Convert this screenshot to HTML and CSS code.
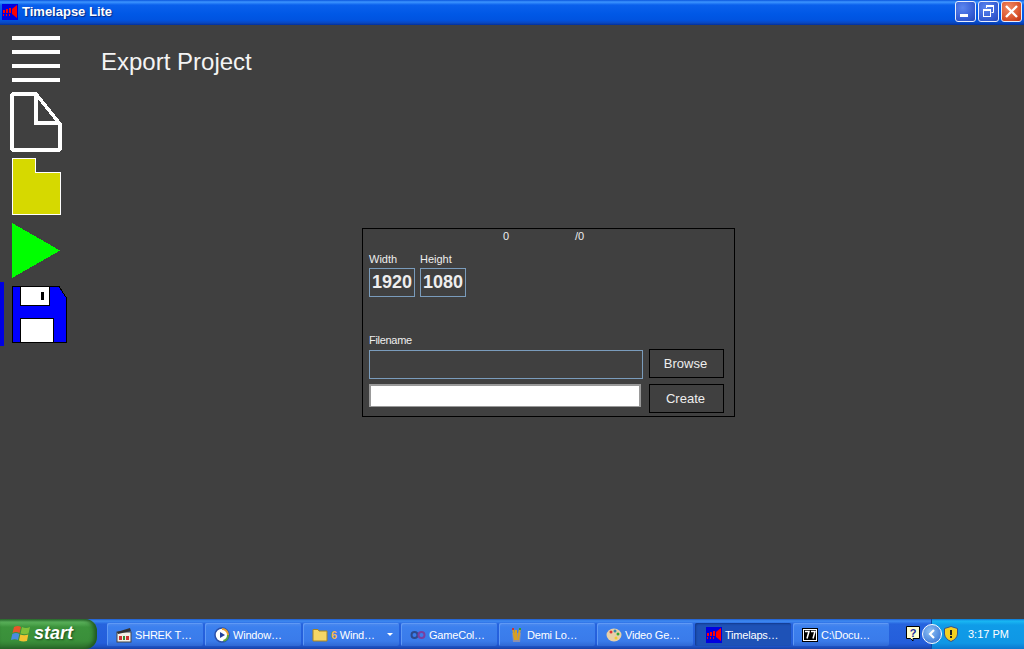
FILE: index.html
```html
<!DOCTYPE html>
<html lang="en">
<head>
  <meta charset="UTF-8">
  <title>Timelapse Lite</title>
  <link rel="stylesheet" href="styles.css">
</head>
<body>
  <div class="window">
    <div class="titlebar">
      <svg class="app-icon" width="16" height="16" viewBox="0 0 16 16"><rect width="16" height="16" fill="#0000e0"/><path d="M1 6h2v3H1zM4 5h2v4H4zM7 4h2v5H7zM1 10h1v2H1zM4 10h1v2H4zM7 10h1v2H7z" fill="#f00"/><path d="M10 5l5-4v13l-5-4z" fill="#f00"/></svg>
      <span class="app-name">Timelapse Lite</span>
      <div class="win-buttons">
        <div class="win-btn">
          <svg width="21" height="21" viewBox="0 0 21 21"><rect x="5" y="13" width="8" height="3" fill="#fff"/></svg>
        </div>
        <div class="win-btn">
          <svg width="21" height="21" viewBox="0 0 21 21"><path d="M8.500 4.500h7v7h-2M8.500 4.500v2.500" fill="none" stroke="#fff"/><path d="M8 4h8v2H8z" fill="#fff"/><rect x="5.500" y="8.500" width="7" height="7" fill="none" stroke="#fff"/><rect x="5" y="8" width="8" height="2" fill="#fff"/></svg>
        </div>
        <div class="win-btn close">
          <svg width="21" height="21" viewBox="0 0 21 21"><path d="M5 5l11 11M16 5L5 16" stroke="#fff" stroke-width="2.400"/></svg>
        </div>
      </div>
    </div>

    <div class="main">
      <div class="sidebar">
        <div class="tool tool-menu">
          <span></span><span></span><span></span><span></span>
        </div>
        <svg class="tool tool-new" width="52" height="60" viewBox="0 0 52 60"><path d="M2 3 Q2 2 3 2H26L50 32V56Q50 58 48 58H4Q2 58 2 56Z" fill="none" stroke="#fff" stroke-width="3.500"/><path d="M26 2V31H50" fill="none" stroke="#fff" stroke-width="3.500"/></svg>
        <svg class="tool tool-open" width="49" height="57" viewBox="0 0 49 57"><path d="M.5 .5H23.500V14.500H48.500V56.500H.5Z" fill="#d6d900" stroke="#fff"/></svg>
        <svg class="tool tool-play" width="48" height="55" viewBox="0 0 48 55"><path d="M0 0L48 27.500 0 55Z" fill="#0f0"/></svg>
        <div class="tool-save">
          <svg width="55" height="57" viewBox="0 0 55 57"><path d="M.5 .5H47L54.500 12V56.500H.5Z" fill="#00f" stroke="#000"/><rect x="8.500" y=".5" width="29" height="19" fill="#fff" stroke="#000"/><rect x="29" y="6" width="3" height="8" fill="#000"/><rect x="8.500" y="32.500" width="33" height="24" fill="#fff" stroke="#000"/></svg>
        </div>
      </div>

      <div class="content">
        <h1 class="heading">Export Project</h1>
        <div class="panel">
          <div class="counter">
            <span class="count">0</span>
            <span class="total">/0</span>
          </div>
          <div class="size-row">
            <div class="field">
              <label>Width</label>
              <div class="size-box">1920</div>
            </div>
            <div class="field">
              <label>Height</label>
              <div class="size-box">1080</div>
            </div>
          </div>
          <label class="file-label">Filename</label>
          <div class="file-row">
            <div class="file-box"></div>
            <div class="btn">Browse</div>
          </div>
          <div class="create-row">
            <div class="progress"></div>
            <div class="btn">Create</div>
          </div>
        </div>
      </div>
    </div>
  </div>

  <div class="taskbar">
    <div class="start">
      <svg width="22" height="20" viewBox="0 0 22 20"><path d="M3 3Q7 1 10 3L8.500 9Q5 7 1.500 9Z" fill="#e8552a"/><path d="M11 3Q15 5 19 3L17.500 9.500Q13.500 11 9.500 9.500Z" fill="#7fc03a"/><path d="M1.300 10Q5 8 8.300 10L7 16Q4 14.500 0 16Z" fill="#4a8be0"/><path d="M9.300 10.500Q13 12 17.300 10.500L16 17Q12 18 8 16.500Z" fill="#f2c230"/></svg>
      <span>start</span>
    </div>
    <div class="tasks">
      <div class="task">
        <svg width="16" height="16" viewBox="0 0 16 16"><rect x="1" y="5" width="14" height="10" fill="#f4f0e8" stroke="#444"/><path d="M1 5L14 1l1 3L2 7z" fill="#333"/><path d="M3 9h3v4H3z" fill="#c33"/><path d="M7 9h2v4H7z" fill="#383"/><path d="M10 9h3v4h-3z" fill="#c33"/></svg>
        <span class="task-text">SHREK T…</span>
      </div>
      <div class="task">
        <svg width="16" height="16" viewBox="0 0 16 16"><circle cx="8" cy="8" r="7" fill="#fff" stroke="#2b4fa8" stroke-width="1.500"/><path d="M8 1a7 7 0 0 1 7 7h-2a5 5 0 0 0-5-5z" fill="#e8a030"/><path d="M15 8a7 7 0 0 1-5 6.700L9 13a5 5 0 0 0 4-5z" fill="#5aa840"/><path d="M6 5l5 3-5 3z" fill="#1f3f9c"/></svg>
        <span class="task-text">Window…</span>
      </div>
      <div class="task">
        <svg width="16" height="14" viewBox="0 0 16 14"><path d="M1 3V1.500H6L7 3H15V13H1Z" fill="#f5d667" stroke="#a88420"/></svg>
        <span class="task-text"><b class="group-count">6</b> Wind…</span>
        <span class="arrow"></span>
      </div>
      <div class="task">
        <svg width="16" height="10" viewBox="0 0 16 10"><circle cx="4.500" cy="5" r="3" fill="none" stroke="#2c4a8c" stroke-width="2"/><circle cx="11.500" cy="5" r="3" fill="none" stroke="#7a3fa0" stroke-width="2"/></svg>
        <span class="task-text">GameCol…</span>
      </div>
      <div class="task">
        <svg width="16" height="16" viewBox="0 0 16 16"><path d="M4 6h9l-1 9H5z" fill="#8a8fb0"/><path d="M5 1l2 12M8 3v10M12 1l-2 12" stroke-width="2" fill="none" stroke="#d9a020"/><path d="M4 1h2v2H4z" fill="#c33"/><path d="M11 1h2v2h-2z" fill="#393"/></svg>
        <span class="task-text">Demi Lo…</span>
      </div>
      <div class="task">
        <svg width="16" height="16" viewBox="0 0 16 16"><ellipse cx="8" cy="8" rx="7.500" ry="6.500" fill="#e8d0a8"/><circle cx="5" cy="5" r="1.500" fill="#d33"/><circle cx="9" cy="4" r="1.500" fill="#38a"/><circle cx="12" cy="7" r="1.500" fill="#3a3"/><circle cx="10" cy="11" r="1.500" fill="#ec3"/></svg>
        <span class="task-text">Video Ge…</span>
      </div>
      <div class="task active">
        <svg width="16" height="16" viewBox="0 0 16 16"><rect width="16" height="16" fill="#0000e0"/><path d="M1 6h2v3H1zM4 5h2v4H4zM7 4h2v5H7zM1 10h1v2H1zM4 10h1v2H4zM7 10h1v2H7z" fill="#f00"/><path d="M10 5l5-4v13l-5-4z" fill="#f00"/></svg>
        <span class="task-text">Timelaps…</span>
      </div>
      <div class="task">
        <svg width="16" height="14" viewBox="0 0 16 14"><rect x=".5" y=".5" width="15" height="13" fill="#fff" stroke="#000"/><rect x="2" y="2" width="12" height="10" fill="#000"/><path d="M3 3.500h4L5 10.500M9 3.500h4L11 10.500" fill="none" stroke="#fff" stroke-width="1.500"/></svg>
        <span class="task-text">C:\Docu…</span>
      </div>
    </div>
    <div class="quick">
      <svg width="14" height="16" viewBox="0 0 14 16"><path d="M.5 .5H13.500V12.500H7V15L4.500 12.500H.5Z" fill="#ffffd0" stroke="#000"/><text x="7" y="10.500" text-anchor="middle" class="help-mark">?</text></svg>
    </div>
    <div class="tray">
      <div class="chevron">
        <svg width="10" height="10" viewBox="0 0 10 10"><path d="M7 1L3 5l4 4" fill="none" stroke="#fff" stroke-width="2.200"/></svg>
      </div>
      <svg class="shield" width="14" height="16" viewBox="0 0 14 16"><path d="M7 .5L13.500 2.500V8Q13 13 7 15.500 1 13 .5 8V2.500Z" fill="#f4d020" stroke="#35508c"/><rect x="6" y="4" width="2" height="5" fill="#222"/><rect x="6" y="10" width="2" height="2" fill="#222"/></svg>
      <span class="clock">3:17 PM</span>
    </div>
  </div>
</body>
</html>
```

FILE: styles.css
```css
* {
  box-sizing: border-box;
}
body {
  display: flex;
  flex-direction: column;
  height: 100vh;
  margin: 0;
  overflow: hidden;
  background-color: #404040;
  font-family: "Liberation Sans", Arial, sans-serif;
  color: white;
}
.window {
  flex: 1;
  display: flex;
  flex-direction: column;
  min-height: 0;
}

/* title bar */
.titlebar {
  display: flex;
  align-items: center;
  height: 25px;
  padding: 0 2px 2px 2px;
  background: linear-gradient(to bottom, #0a55dd 0, #3d95ff 2px, #0a60ec 5px, #0058e6 14px, #0053e0 20px, #0a47bd 23px, #00309c 25px);
}
.app-icon {
  flex: none;
}
.app-name {
  margin-left: 4px;
  font-size: 13px;
  font-weight: bold;
  text-shadow: 1px 1px 1px #0a2a80;
}
.win-buttons {
  display: flex;
  gap: 2px;
  margin-left: auto;
}
.win-btn {
  width: 21px;
  height: 21px;
  border: 1px solid #e8eefc;
  border-radius: 3px;
  background: radial-gradient(circle at 35% 30%, #5c86ee 0, #3a62d8 55%, #2347bd 100%);
  overflow: hidden;
}
.win-btn svg {
  display: block;
  margin: -1px;
}
.win-btn.close {
  background: radial-gradient(circle at 35% 30%, #ee8a66 0, #dd5a32 55%, #bd3010 100%);
}

/* main area */
.main {
  flex: 1;
  display: flex;
  min-height: 0;
}
.sidebar {
  display: flex;
  flex-direction: column;
  align-items: flex-start;
  width: 101px;
  padding: 11px 0 0 12px;
}
.sidebar svg {
  shape-rendering: crispEdges;
}
.tool {
  display: block;
  flex: none;
}
.tool-menu {
  display: flex;
  flex-direction: column;
  gap: 10px;
  width: 48px;
}
.tool-menu span {
  height: 4px;
  background-color: white;
}
.tool-new {
  margin: 10px 0 0 -2px;
}
.tool-open {
  margin-top: 6px;
}
.tool-play {
  margin-top: 8px;
}
.tool-save {
  position: relative;
  margin-top: 8px;
}
.tool-save svg {
  display: block;
}
.tool-save::before {
  content: "";
  position: absolute;
  left: -12px;
  top: -4px;
  width: 4px;
  height: 64px;
  background-color: #0000e0;
}
.content {
  flex: 1;
  min-width: 0;
}
.heading {
  margin: 23px 0 0 0;
  font-size: 24px;
  line-height: 28px;
  font-weight: normal;
  color: #f4f4f4;
}
.panel {
  display: flex;
  flex-direction: column;
  width: 373px;
  height: 189px;
  margin: 152px 0 0 261px;
  padding: 0 10px 0 6px;
  border: 1px solid #000;
  font-size: 11px;
  color: #eee;
}
.counter {
  display: flex;
  height: 14px;
  margin-top: 0;
  margin-bottom: 1px;
  line-height: 14px;
}
.count {
  margin-left: 134px;
  width: 72px;
}
.size-row {
  display: flex;
  gap: 5px;
  margin-top: 9px;
}
.field label {
  display: block;
  line-height: 13px;
  margin-bottom: 2px;
}
.size-box {
  width: 46px;
  height: 29px;
  border: 1px solid #7a9cbc;
  font-size: 18px;
  font-weight: bold;
  line-height: 27px;
  text-align: center;
}
.file-label {
  display: block;
  margin-top: 37px;
  line-height: 13px;
  letter-spacing: -0.3px;
}
.file-row {
  display: flex;
  align-items: flex-start;
  gap: 6px;
  margin-top: 2px;
}
.file-box {
  width: 274px;
  height: 29px;
  margin-top: 1px;
  border: 1px solid #7a9cbc;
}
.create-row {
  display: flex;
  align-items: flex-start;
  gap: 8px;
  margin-top: 5px;
}
.progress {
  width: 272px;
  height: 23px;
  border: 1px solid #999;
  border-width: 2px 2px 1px 2px;
  background-color: white;
}
.btn {
  width: 75px;
  height: 29px;
  padding-right: 2px;
  border: 1px solid #000;
  font-size: 13px;
  line-height: 27px;
  text-align: center;
}

/* taskbar */
.taskbar {
  display: flex;
  align-items: center;
  height: 30px;
  flex: none;
  background: linear-gradient(to bottom, #1f5ccf 0, #3f8cf3 2px, #2663de 5px, #245edb 24px, #1c4fc0 28px, #1941a5 30px);
  font-size: 11px;
}
.start {
  display: flex;
  align-items: center;
  gap: 1px;
  flex: none;
  width: 97px;
  height: 30px;
  padding: 0 0 1px 11px;
  border-radius: 0 12px 12px 0;
  background: linear-gradient(to bottom, #2f7a35 0, #5cb35c 3px, #3c933c 8px, #3a8f3a 22px, #2c6f2c 30px);
  box-shadow: inset -3px 0 4px #1f5520;
  font-size: 18px;
  font-weight: bold;
  font-style: italic;
  text-shadow: 1px 1px 2px #1b4a1b;
}
.tasks {
  display: flex;
  gap: 2px;
  margin-left: 10px;
}
.task {
  display: flex;
  align-items: center;
  gap: 3px;
  width: 96px;
  height: 23px;
  margin-top: 1px;
  padding: 0 6px 0 9px;
  border-radius: 2px;
  background: linear-gradient(to bottom, #4f8bef 0, #3c80ee 4px, #3a7bea 18px, #2f68d4 23px);
  box-shadow: inset 1px 1px 0 #5f99f5;
}
.task svg {
  flex: none;
}
.task-text {
  white-space: nowrap;
  letter-spacing: -0.2px;
}
.group-count {
  color: #f5b84c;
}
.task.active {
  padding-left: 11px;
  background: #1e52b7;
  box-shadow: inset 1px 1px 2px #123a8c;
}
.arrow {
  width: 0;
  height: 0;
  margin-left: auto;
  border-left: 3px solid transparent;
  border-right: 3px solid transparent;
  border-top: 3px solid white;
}
.quick {
  display: flex;
  margin-left: 17px;
  margin-right: 13px;
}
.help-mark {
  font-size: 11px;
  font-weight: bold;
  fill: #1a2a9c;
}
.tray {
  flex: 1;
  display: flex;
  align-items: center;
  height: 30px;
  margin-left: -2px;
  background: linear-gradient(to bottom, #0c75d8 0, #19b8f3 2px, #0f9ce8 6px, #0f97e5 24px, #0b78cf 30px);
  border-left: 1px solid #0f4aa8;
}
.chevron {
  display: flex;
  align-items: center;
  justify-content: center;
  width: 20px;
  height: 20px;
  margin-left: -10px;
  border: 1px solid white;
  border-radius: 50%;
  background: radial-gradient(circle at 40% 35%, #8cc0f5, #2a68cf);
}
.shield {
  margin-left: 2px;
}
.clock {
  margin-left: 10px;
}
```
